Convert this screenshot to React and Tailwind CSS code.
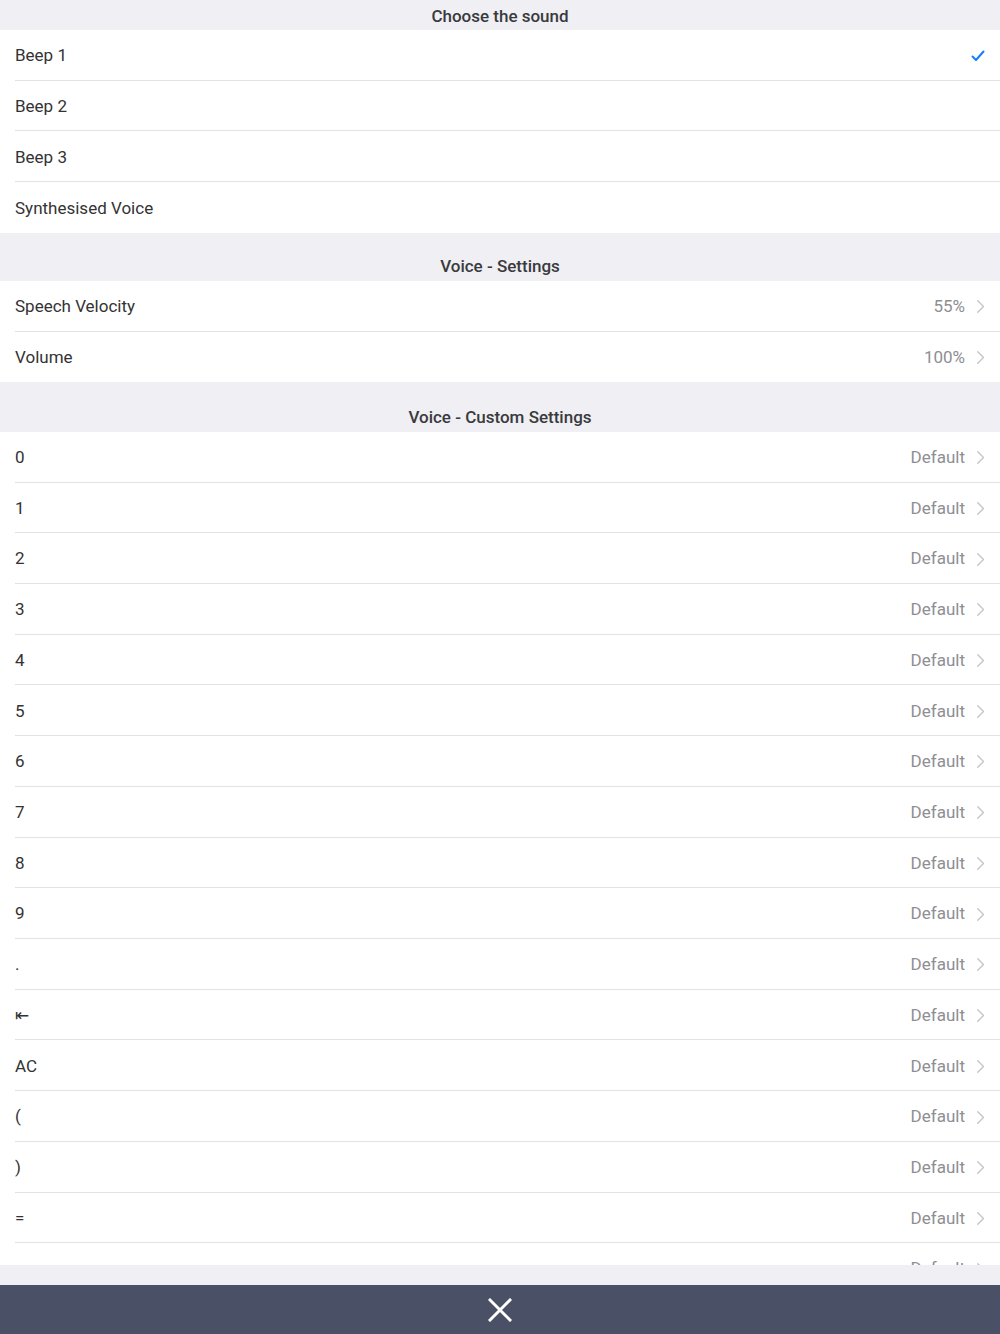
import React from "react";

const Chevron = () => (
  <svg width="9" height="15" viewBox="0 0 9 15" className="ml-[11px]">
    <path d="M1.75 1.75 L7.5 7.5 L1.75 13.25" fill="none" stroke="#c4c4c9" strokeWidth="1.4" strokeLinecap="round" strokeLinejoin="round" />
  </svg>
);

const Check = () => (
  <svg width="14" height="12" viewBox="0 0 14 12">
    <path d="M1.5 6.5 L5 10 L12.5 1.5" fill="none" stroke="#147efb" strokeWidth="2" strokeLinecap="round" strokeLinejoin="round" />
  </svg>
);

const Row = ({ label, value, check, last }) => (
  <div className="bg-white pl-[15px] shrink-0">
    <div className={`h-[50.73px] pt-[2px] flex items-center pr-[15px] ${last ? "" : "border-b border-[#e3e3e6]"}`}>
      <span className="flex-1 text-[17px] text-[#333333]">{label}</span>
      {value && <span className="text-[17px] text-[#8e8e93]">{value}</span>}
      {value && <Chevron />}
      {check && <Check />}
    </div>
  </div>
);

const Header = ({ children, h }) => (
  <div className={`bg-[#efeff4] shrink-0 flex items-end justify-center pb-[1px] ${h}`}>
    <span className="text-[17px] font-medium text-[#3a3a3c]">{children}</span>
  </div>
);

export default function App() {
  const custom = ["0", "1", "2", "3", "4", "5", "6", "7", "8", "9", ".", "⇤", "AC", "(", ")", "=", "−"];
  return (
    <div className="w-[1000px] h-[1334px] flex flex-col bg-[#efeff4]" style={{ fontFamily: "Roboto, 'Noto Sans', sans-serif" }}>
      <div className="flex-1 min-h-0 overflow-hidden flex flex-col">
        <Header h="h-[30px]">Choose the sound</Header>
        <Row label="Beep 1" check />
        <Row label="Beep 2" />
        <Row label="Beep 3" />
        <Row label="Synthesised Voice" last />
        <Header h="h-[48px]">Voice - Settings</Header>
        <Row label="Speech Velocity" value="55%" />
        <Row label="Volume" value="100%" last />
        <Header h="h-[49.5px]">Voice - Custom Settings</Header>
        {custom.map((c, i) => (
          <Row key={i} label={c} value="Default" />
        ))}
      </div>
      <div className="h-[20px] shrink-0 bg-[#efeff4]" />
      <div className="h-[49px] shrink-0 bg-[#4a5065] flex items-center justify-center">
        <svg width="24" height="24" viewBox="0 0 24 24">
          <path d="M2 2 L22 22 M22 2 L2 22" stroke="white" strokeWidth="3" strokeLinecap="square" />
        </svg>
      </div>
    </div>
  );
}
